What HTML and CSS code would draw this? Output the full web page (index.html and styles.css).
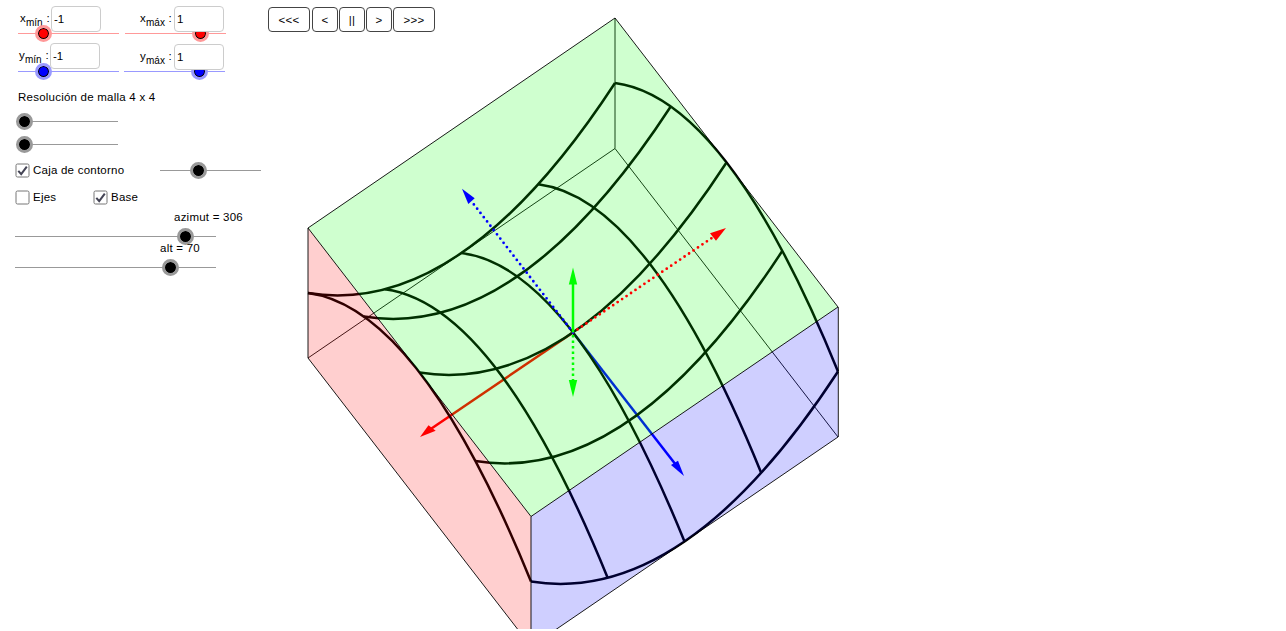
FILE: index.html
```
<!DOCTYPE html>
<html lang="es">
<head>
  <meta charset="UTF-8">
  <meta name="viewport" content="width=device-width, initial-scale=1.0">
  <title>Superficie z = x² - y²</title>
  <link rel="stylesheet" href="styles.css">
</head>
<body>
  <!-- Panel de controles -->
  <div class="panel">
    <div class="limits">
      <div class="field">
        <div class="entry">
          <label for="xmin">x<sub>mín</sub><span>:</span></label>
          <input type="text" id="xmin" value="-1">
        </div>
        <div class="slider red"><i class="thumb" style="left: 25%"></i></div>
      </div>
      <div class="field max">
        <div class="entry">
          <label for="xmax">x<sub>máx</sub><span>:</span></label>
          <input type="text" id="xmax" value="1">
        </div>
        <div class="slider red"><i class="thumb" style="left: 75%"></i></div>
      </div>
      <div class="field y">
        <div class="entry">
          <label for="ymin">y<sub>mín</sub><span>:</span></label>
          <input type="text" id="ymin" value="-1">
        </div>
        <div class="slider blue"><i class="thumb" style="left: 25%"></i></div>
      </div>
      <div class="field max y">
        <div class="entry">
          <label for="ymax">y<sub>máx</sub><span>:</span></label>
          <input type="text" id="ymax" value="1">
        </div>
        <div class="slider blue"><i class="thumb" style="left: 75%"></i></div>
      </div>
    </div>

    <!-- Resolución de la malla -->
    <p class="mesh-label">Resolución de malla 4 x 4</p>
    <div class="slider mesh"><i class="thumb" style="left: 6%"></i></div>
    <div class="slider mesh"><i class="thumb" style="left: 6%"></i></div>

    <!-- Casillas -->
    <div class="checks">
      <div class="check">
        <svg class="box" viewBox="0 0 15 15"><rect x="1" y="1" width="13" height="13" rx="1.5"/><path d="M3.3 7.8 L6.2 11.2 L11.8 3.6"/></svg>
        <span>Caja de contorno</span>
      </div>
      <div class="slider opacity"><i class="thumb" style="left: 38%"></i></div>
    </div>
    <div class="checks second">
      <div class="check axes">
        <svg class="box" viewBox="0 0 15 15"><rect x="1" y="1" width="13" height="13" rx="1.5"/></svg>
        <span>Ejes</span>
      </div>
      <div class="check">
        <svg class="box" viewBox="0 0 15 15"><rect x="1" y="1" width="13" height="13" rx="1.5"/><path d="M3.3 7.8 L6.2 11.2 L11.8 3.6"/></svg>
        <span>Base</span>
      </div>
    </div>

    <!-- Punto de vista -->
    <p class="azimut">azimut = 306</p>
    <div class="slider view"><i class="thumb" style="left: 85%"></i></div>
    <p class="alt">alt = 70</p>
    <div class="slider view"><i class="thumb" style="left: 77.5%"></i></div>
  </div>

  <!-- Vista 3D -->
  <div class="stage">
    <div class="player">
      <button class="wide">&lt;&lt;&lt;</button>
      <button>&lt;</button>
      <button>||</button>
      <button>&gt;</button>
      <button class="wide">&gt;&gt;&gt;</button>
    </div>

    <svg class="plot" viewBox="262 0 1024 629">
      <!-- aristas ocultas -->
      <path class="edge" d="M308 358 L615 148.5 L838 437 M615 18 V148.5"/>

      <!-- ejes positivos -->
      <path class="axis x" d="M573 332.5 L430 429.5"/>
      <path class="axis y" d="M573 332.5 L676 465"/>

      <!-- malla -->
      <g class="grid">
        <path d="M308 293 Q461.5 318 615 83"/>
        <path d="M363.75 316.5 Q517.25 341.5 670.75 106.5"/>
        <path d="M419.5 372.5 Q573 397.5 726.5 162.5"/>
        <path d="M475.25 461 Q628.75 486 782.25 251"/>
        <path d="M531 581.5 Q684.5 606.5 838 371.5"/>
        <path d="M308 293 Q419.5 307.5 531 581.5"/>
        <path d="M384.75 289.25 Q496.25 303.75 607.75 578"/>
        <path d="M461.5 253 Q573 267.5 684.5 541.5"/>
        <path d="M538.25 184.25 Q649.75 198.75 761.25 473"/>
        <path d="M615 83 Q726.5 97.5 838 371.5"/>
      </g>

      <!-- caras de la caja -->
      <path class="face top" d="M308 228 L615 18 L838 307 L531 516.5 Z"/>
      <path class="face left" d="M308 228 L531 516.5 V646.5 L308 358 Z"/>
      <path class="face right" d="M531 516.5 L838 307 V437 L531 646.5 Z"/>
      <path class="edge" d="M308 228 L615 18 L838 307 L531 516.5 Z M308 358 L531 646.5 L838 437"/>
      <path class="edge" d="M308 228 V358 M531 516.5 V646.5 M838.3 307 V437"/>

      <!-- ejes negativos y eje z -->
      <path class="axis x dotted" d="M573 332.5 L714 236.5"/>
      <path class="axis y dotted" d="M573 332.5 L472 202"/>
      <path class="axis z" d="M573 332.5 V283"/>
      <path class="axis z dashed" d="M573 335 V381"/>
      <g class="heads">
        <path class="x" d="M420 437 L428.5 425.2 L435.7 430.8 Z"/>
        <path class="x" d="M726 228 L710 233.3 L716 240.7 Z"/>
        <path class="y" d="M684 476 L671 465 L678 460.7 Z"/>
        <path class="y" d="M462 188.7 L468.3 204 L474.7 198.3 Z"/>
        <path class="z" d="M573 267.5 L577.2 284.5 H568.8 Z"/>
        <path class="z" d="M573 397 L577.2 380 H568.8 Z"/>
      </g>
    </svg>
  </div>
</body>
</html>
```
FILE: styles.css
```
/* General */
body {
  margin: 0;
  height: 631px;
  display: flex;
  overflow: hidden;
  background: #fff;
  color: #000;
  font-family: "Liberation Sans", Arial, sans-serif;
  font-size: 11.5px;
  letter-spacing: 0.23px;
  line-height: 14px;
}

p {
  margin: 0;
}

/* Panel de controles */
.panel {
  width: 262px;
  flex: none;
}

.limits {
  display: grid;
  grid-template-columns: 107px 100px;
  grid-template-rows: 38px 38px;
  padding-left: 18px;
}

.field {
  padding-top: 6px;
}

.field.max.y {
  margin-left: -1px;
}

.entry {
  display: flex;
  height: 26px;
}

.entry label {
  display: flex;
  width: 31px;
  padding-left: 2px;
  padding-top: 5px;
}

.max .entry label {
  width: 34px;
  padding-left: 15px;
}

.y .entry label {
  padding-left: 1px;
}

.max.y .entry label {
  width: 34px;
  padding-left: 16px;
}

.y .entry {
  margin-top: -1px;
  margin-bottom: 2px;
}

.max.y .entry {
  margin-top: 0;
  margin-bottom: 0;
}

.entry sub {
  font-size: 10px;
  letter-spacing: 0;
  line-height: 14px;
  padding-top: 5px;
}

.entry span {
  margin-left: auto;
  margin-right: 1px;
}

.max .entry span {
  margin-right: 2px;
}

.entry input {
  position: relative;
  z-index: 1;
  box-sizing: border-box;
  width: 50px;
  height: 26px;
  padding: 0 2px;
  border: 1px solid #ccc;
  border-radius: 4px;
  background: #fff;
  font: inherit;
}

/* Deslizadores */
.slider {
  position: relative;
  width: 101px;
  height: 1px;
  margin-top: 1px;
  background: #999;
}

.thumb {
  position: absolute;
  top: -8px;
  width: 11px;
  height: 11px;
  margin-left: -8.5px;
  border: 3px solid #999;
  border-radius: 50%;
  background: #000;
  background-clip: padding-box;
  box-shadow: inset 0 0 0 1px #000;
}

.red {
  background: #f99;
}

.red .thumb {
  border-color: #f99;
  background-color: #f00;
}

.blue {
  background: #99f;
}

.blue .thumb {
  border-color: #99f;
  background-color: #00f;
}

.mesh-label {
  padding: 14px 0 0 18px;
}

.mesh {
  width: 100px;
  margin: 17px 0 0 18px;
}

.mesh + .mesh {
  margin-top: 22px;
}

/* Casillas */
.checks {
  display: flex;
  align-items: center;
  height: 15px;
  margin-top: 18px;
  padding-left: 15px;
}

.checks.second {
  margin-top: 12px;
}

.check {
  display: flex;
  align-items: flex-start;
  gap: 3px;
  width: 145px;
}

.check.axes {
  width: 78px;
}

.box {
  width: 15px;
  height: 15px;
  fill: none;
  stroke: #777;
}

.box path {
  stroke: #445;
  stroke-width: 2;
}

.opacity {
  margin: 0;
}

/* Punto de vista */
.azimut {
  padding: 5px 0 0 174px;
}

.alt {
  position: relative;
  z-index: 1;
  padding: 4px 0 0 160px;
}

.view {
  width: 201px;
  margin-left: 15px;
  margin-top: 12px;
}

/* Vista 3D */
.stage {
  display: grid;
  width: 1024px;
}

.player,
.plot {
  grid-area: 1 / 1;
}

.player {
  display: flex;
  align-items: flex-start;
  gap: 1px;
  padding: 7px 0 0 6px;
  z-index: 1;
}

.player button {
  box-sizing: border-box;
  width: 26px;
  height: 25px;
  padding: 0;
  border: 1px solid #444;
  border-radius: 4px;
  background: #fff;
  color: #000;
  font: inherit;
  letter-spacing: 0.23px;
}

.player .wide {
  width: 42px;
}

.player .wide:first-child {
  margin-right: 1px;
}

.plot {
  width: 1024px;
  height: 629px;
  fill: none;
}

.edge {
  stroke: #000;
  stroke-width: 0.9;
}

.grid {
  stroke: #000;
  stroke-width: 2.5;
}

.face.top {
  fill: rgba(0, 255, 0, 0.19);
}

.face.left {
  fill: rgba(255, 0, 0, 0.19);
}

.face.right {
  fill: rgba(0, 0, 255, 0.19);
}

/* Ejes */
.axis {
  stroke-width: 2.5;
}

.axis.x {
  stroke: #f00;
}

.axis.y {
  stroke: #00f;
}

.axis.z {
  stroke: #0f0;
}

.dotted {
  stroke-width: 2.8;
  stroke-linecap: round;
  stroke-dasharray: 0 5.4;
}

.dashed {
  stroke-dasharray: 2.6 2.9;
}

.heads .x {
  fill: #f00;
}

.heads .y {
  fill: #00f;
}

.heads .z {
  fill: #0f0;
}
```
